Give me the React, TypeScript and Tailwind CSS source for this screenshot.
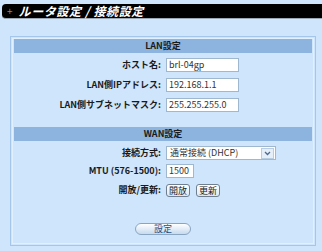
const font = { fontFamily: '"Noto Sans CJK JP", "DejaVu Sans", sans-serif' };

const inputCls =
  'h-[14px] border border-[#9fb7cf] bg-white px-[2px] text-[9px] leading-[12px] text-[#333]';

const Row = ({ label, children, className = '' }: { label: string; children: React.ReactNode; className?: string }) => (
  <div className={'flex items-center h-[14px] ' + className}>
    <div className="w-[148px] text-right text-[9px] font-bold text-[#1a1a1a]">{label}</div>
    <div className="ml-[5px] flex items-center gap-[6px]">{children}</div>
  </div>
);

const SmallBtn = ({ text }: { text: string }) => (
  <button className="h-[13px] rounded-[3px] border border-[#6f7f90] bg-gradient-to-b from-white to-[#dde7f1] px-[2px] text-[9px] leading-[11px] text-[#222]">
    {text}
  </button>
);

export default function App() {
  return (
    <div className="w-[322px] h-[251px] bg-[#cfe5fb] overflow-hidden" style={font}>
      <div className="pt-[4px] pl-[2px]">
        <div className="h-[15px] bg-black rounded-l-[4px] border-b border-[#9aa7b4] flex items-center">
          <span className="ml-[5px] text-[10px] text-[#888] leading-none">+</span>
          <span className="ml-[6px] text-[12px] font-bold italic text-white leading-none tracking-[0.6px]">
            ルータ設定 / 接続設定
          </span>
        </div>
      </div>

      <div className="ml-[10px] mt-[17px] w-[306px] h-[210px] border border-[#a4c6ea] bg-[#cfe5fb] p-[1px]">
        <div className="border border-[#e2effc] h-full">
          <div className="mx-[1px] h-[14px] bg-[#8cb4df] flex items-center justify-center text-[9px] font-bold text-[#1a1a1a]">
            LAN設定
          </div>
          <div className="pt-[5px]">
            <Row label="ホスト名:">
              <div className={inputCls + ' w-[73px]'}>brl-04gp</div>
            </Row>
            <Row label="LAN側IPアドレス:" className="mt-[6px]">
              <div className={inputCls + ' w-[73px]'}>192.168.1.1</div>
            </Row>
            <Row label="LAN側サブネットマスク:" className="mt-[6px]">
              <div className={inputCls + ' w-[73px]'}>255.255.255.0</div>
            </Row>
          </div>

          <div className="mt-[15px] mx-[1px] h-[14px] bg-[#8cb4df] flex items-center justify-center text-[9px] font-bold text-[#1a1a1a]">
            WAN設定
          </div>
          <div className="pt-[5px]">
            <Row label="接続方式:">
              <div className="h-[14px] w-[110px] border border-[#9fb7cf] bg-white flex items-center justify-between">
                <span className="pl-[3px] text-[9px] text-[#333]">通常接続 (DHCP)</span>
                <span className="mr-[1px] h-[11px] w-[13px] border border-[#b9cde2] bg-[#e6eef8] flex items-center justify-center">
                  <svg width="7" height="5" viewBox="0 0 7 5">
                    <path d="M1 1 L3.5 3.5 L6 1" stroke="#4a6a90" strokeWidth="1.3" fill="none" />
                  </svg>
                </span>
              </div>
            </Row>
            <Row label="MTU (576-1500):" className="mt-[4px]">
              <div className={inputCls + ' w-[28px]'}>1500</div>
            </Row>
            <Row label="開放/更新:" className="mt-[5px]">
              <SmallBtn text="開放" />
              <SmallBtn text="更新" />
            </Row>
          </div>

          <div className="mt-[26px] flex justify-center">
            <button className="h-[12px] w-[56px] rounded-full border border-[#8aa5c2] bg-gradient-to-b from-white to-[#c6daef] text-[9px] leading-[10px] text-[#1f4f86]">
              設定
            </button>
          </div>
        </div>
      </div>
    </div>
  );
}
